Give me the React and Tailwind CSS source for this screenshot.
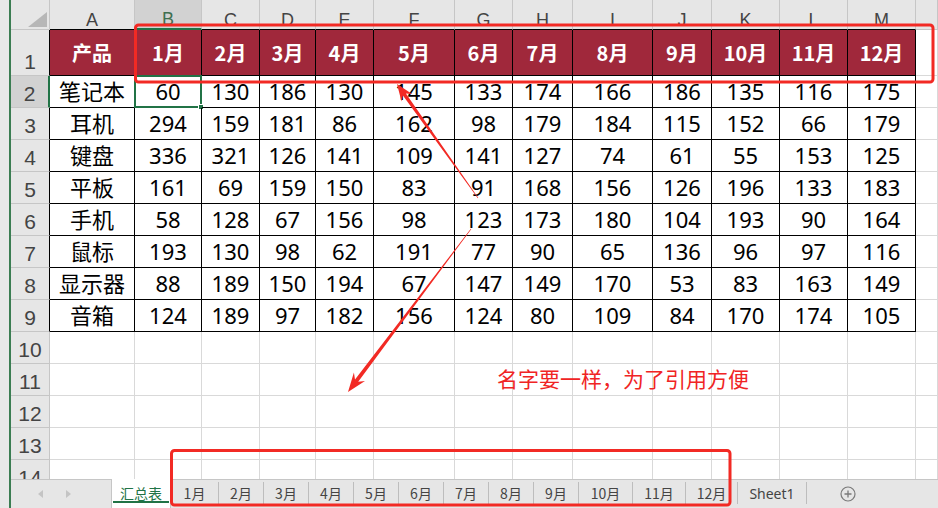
import React from 'react';

const letters = ['A', 'B', 'C', 'D', 'E', 'F', 'G', 'H', 'I', 'J', 'K', 'L', 'M', ''];
const months = ['1月', '2月', '3月', '4月', '5月', '6月', '7月', '8月', '9月', '10月', '11月', '12月'];
const rows = [
  ['笔记本', [60, 130, 186, 130, 145, 133, 174, 166, 186, 135, 116, 175]],
  ['耳机', [294, 159, 181, 86, 162, 98, 179, 184, 115, 152, 66, 179]],
  ['键盘', [336, 321, 126, 141, 109, 141, 127, 74, 61, 55, 153, 125]],
  ['平板', [161, 69, 159, 150, 83, 91, 168, 156, 126, 196, 133, 183]],
  ['手机', [58, 128, 67, 156, 98, 123, 173, 180, 104, 193, 90, 164]],
  ['鼠标', [193, 130, 98, 62, 191, 77, 90, 65, 136, 96, 97, 116]],
  ['显示器', [88, 189, 150, 194, 67, 147, 149, 170, 53, 83, 163, 149]],
  ['音箱', [124, 189, 97, 182, 156, 124, 80, 109, 84, 170, 174, 105]],
];
const tabs = [
  ['1月', 'w-[48px]'], ['2月', 'w-[45px]'], ['3月', 'w-[45px]'], ['4月', 'w-[45px]'],
  ['5月', 'w-[45px]'], ['6月', 'w-[45px]'], ['7月', 'w-[45px]'], ['8月', 'w-[45px]'],
  ['9月', 'w-[45px]'], ['10月', 'w-[54px]'], ['11月', 'w-[53px]'], ['12月', 'w-[52px]'],
  ['Sheet1', 'w-[69px]'],
];

function arrowPoints(tx, ty, hx, hy, tw, sw, hl, hw) {
  const dx = hx - tx, dy = hy - ty;
  const len = Math.hypot(dx, dy);
  const ux = dx / len, uy = dy / len;
  const nx = -uy, ny = ux;
  const bx = hx - ux * hl * 0.75, by = hy - uy * hl * 0.75;
  const cx = hx - ux * hl, cy = hy - uy * hl;
  const p = [
    [tx + nx * tw / 2, ty + ny * tw / 2],
    [bx + nx * sw / 2, by + ny * sw / 2],
    [cx + nx * hw / 2, cy + ny * hw / 2],
    [hx, hy],
    [cx - nx * hw / 2, cy - ny * hw / 2],
    [bx - nx * sw / 2, by - ny * sw / 2],
    [tx - nx * tw / 2, ty - ny * tw / 2],
  ];
  return p.map(([a, b]) => `${a.toFixed(1)},${b.toFixed(1)}`).join(' ');
}

const dataFont = "font-['Noto_Sans','Noto_Sans_CJK_SC',sans-serif]";
const hdrFont = "font-['Liberation_Sans',sans-serif]";

export default function App() {
  const cells = [];
  cells.push(
    <div key="corner" className="relative bg-[#e6e6e6] border-r border-b border-[#c6c6c6]">
      <svg className="absolute left-0 top-0" width="39" height="30">
        <polygon points="36,12 36,27 17,27" fill="#b7b7b7" />
      </svg>
    </div>
  );
  letters.forEach((l, i) => {
    const sel = l === 'B';
    const inTable = l !== '';
    cells.push(
      <div
        key={'h' + i}
        className={
          `flex items-end justify-center leading-none text-[18px] ${hdrFont} border-r border-[#c6c6c6] ` +
          (sel
            ? 'bg-[#d2d2d2] text-[#3f6f50] border-b-2 border-b-[#217346]'
            : inTable
            ? 'bg-[#e6e6e6] text-[#444] border-b border-b-black'
            : 'bg-[#e6e6e6] text-[#444] border-b border-b-[#c6c6c6]')
        }
      >
        {l}
      </div>
    );
  });

  cells.push(
    <div key="r1" className={`flex items-end justify-center pb-[3px] leading-none text-[21px] ${hdrFont} text-[#444] bg-[#e6e6e6] border-b border-[#c6c6c6] border-r border-r-black`}>
      1
    </div>
  );
  ['产品', ...months].forEach((m, i) => {
    cells.push(
      <div key={'t' + i} className="flex items-center justify-center bg-[#a0283b] text-white font-bold text-[20px] font-['Noto_Sans_CJK_SC',sans-serif] border-r border-b border-black">
        {m}
      </div>
    );
  });
  cells.push(<div key="t-n" className="bg-white border-r border-b border-[#d9d9d9]" />);

  rows.forEach(([name, vals], ri) => {
    const rn = ri + 2;
    const sel = rn === 2;
    cells.push(
      <div
        key={'rn' + rn}
        className={
          `flex items-end justify-center pb-[3px] leading-none text-[21px] ${hdrFont} border-b border-[#c6c6c6] ` +
          (sel ? 'bg-[#d2d2d2] text-[#444] border-r-2 border-r-[#217346]' : 'bg-[#e6e6e6] text-[#444] border-r border-r-black')
        }
      >
        {rn}
      </div>
    );
    cells.push(
      <div key={'n' + rn} className={`flex items-center justify-center text-[22px] text-black ${dataFont} border-r border-b border-black`}>
        {name}
      </div>
    );
    vals.forEach((v, ci) => {
      const isSel = sel && ci === 0;
      cells.push(
        <div key={'v' + rn + '-' + ci} className={`relative flex items-center justify-center text-[22px] text-black ${dataFont} border-r border-b border-black`}>
          {v}
          {isSel && (
            <div className="absolute -left-[1px] -top-[1px] -right-[1px] -bottom-[1px] border-2 border-[#217346]">
              <div className="absolute -right-[4px] -bottom-[4px] w-[6px] h-[6px] bg-[#217346] border border-white" />
            </div>
          )}
        </div>
      );
    });
    cells.push(<div key={'e' + rn} className="bg-white border-r border-b border-[#d9d9d9]" />);
  });

  [10, 11, 12, 13, 14].forEach((rn) => {
    cells.push(
      <div key={'rn' + rn} className={`flex items-end justify-center pb-[3px] leading-none text-[21px] ${hdrFont} text-[#444] bg-[#e6e6e6] border-b border-r border-[#c6c6c6]`}>
        {rn}
      </div>
    );
    for (let c = 0; c < 14; c++) {
      cells.push(<div key={'x' + rn + '-' + c} className="bg-white border-r border-b border-[#d9d9d9]" />);
    }
  });

  return (
    <div className="relative w-[938px] h-[508px] overflow-hidden bg-white flex">
      <div className="w-[9px] h-full bg-[#e8e8e8]" />
      <div className="w-[2px] h-full bg-[#3b7d52]" />
      <div className="flex-1 flex flex-col min-w-0">
        <div className="h-[479px] overflow-hidden">
          <div className="grid grid-cols-[39px_85px_67px_58px_56px_58px_81px_58px_60px_80px_59px_68px_68px_68px_1fr] grid-rows-[30px_46px_repeat(13,32px)]">
            {cells}
          </div>
        </div>
        <div className="h-[29px] flex items-start bg-[#e6e6e6] border-t border-[#c6c6c6] font-['Noto_Sans_CJK_SC',sans-serif] text-[14px] text-[#444]">
          <div className="w-[100px] h-full flex items-center">
            <svg className="ml-[27px]" width="6" height="8" viewBox="0 0 6 8">
              <polygon points="5,0 5,8 0,4" fill="#c4c4c4" />
            </svg>
            <svg className="ml-[22px]" width="6" height="8" viewBox="0 0 6 8">
              <polygon points="0,0 0,8 5,4" fill="#c4c4c4" />
            </svg>
          </div>
          <div className="relative w-[60px] h-[29px] -mt-[1px] bg-white border-l border-r border-[#c6c6c6] flex items-center justify-center text-[#217346]">
            汇总表
            <div className="absolute left-[1px] right-[1px] bottom-[5px] h-[2px] bg-[#217346]" />
          </div>
          {tabs.map(([t, w]) => (
            <div key={t} className={`${w} h-[22px] mt-[2px] flex items-center justify-center border-r border-[#bdbdbd] ${t === 'Sheet1' ? "font-['Noto_Sans',sans-serif] text-[14px]" : ''}`}>
              <span className="mt-[1px]">{t}</span>
            </div>
          ))}
          <div className="ml-[33px] h-full flex items-center">
            <svg width="16" height="16" viewBox="0 0 16 16">
              <circle cx="8" cy="8" r="7" fill="none" stroke="#7a7a7a" strokeWidth="1.2" />
              <path d="M8 4.5 V11.5 M4.5 8 H11.5" stroke="#7a7a7a" strokeWidth="1.3" />
            </svg>
          </div>
        </div>
      </div>

      <svg className="absolute inset-0 pointer-events-none" width="938" height="508">
        <rect x="135.5" y="25" width="797.5" height="57" rx="3" fill="none" stroke="#f22a24" strokeWidth="3" />
        <rect x="171.5" y="450.5" width="558.5" height="54.5" rx="3" fill="none" stroke="#f22a24" strokeWidth="3" />
        <polygon points={arrowPoints(478, 198, 397, 84, 0.6, 3.6, 17, 13)} fill="#f22a24" />
        <polygon points={arrowPoints(471, 229, 348, 392, 0.6, 4, 19, 14)} fill="#f22a24" />
      </svg>

      <div className="absolute left-[497px] top-[368px] leading-none text-[21px] text-[#f02424] font-['Noto_Sans_CJK_SC',sans-serif] whitespace-nowrap">
        名字要一样，为了引用方便
      </div>
    </div>
  );
}
